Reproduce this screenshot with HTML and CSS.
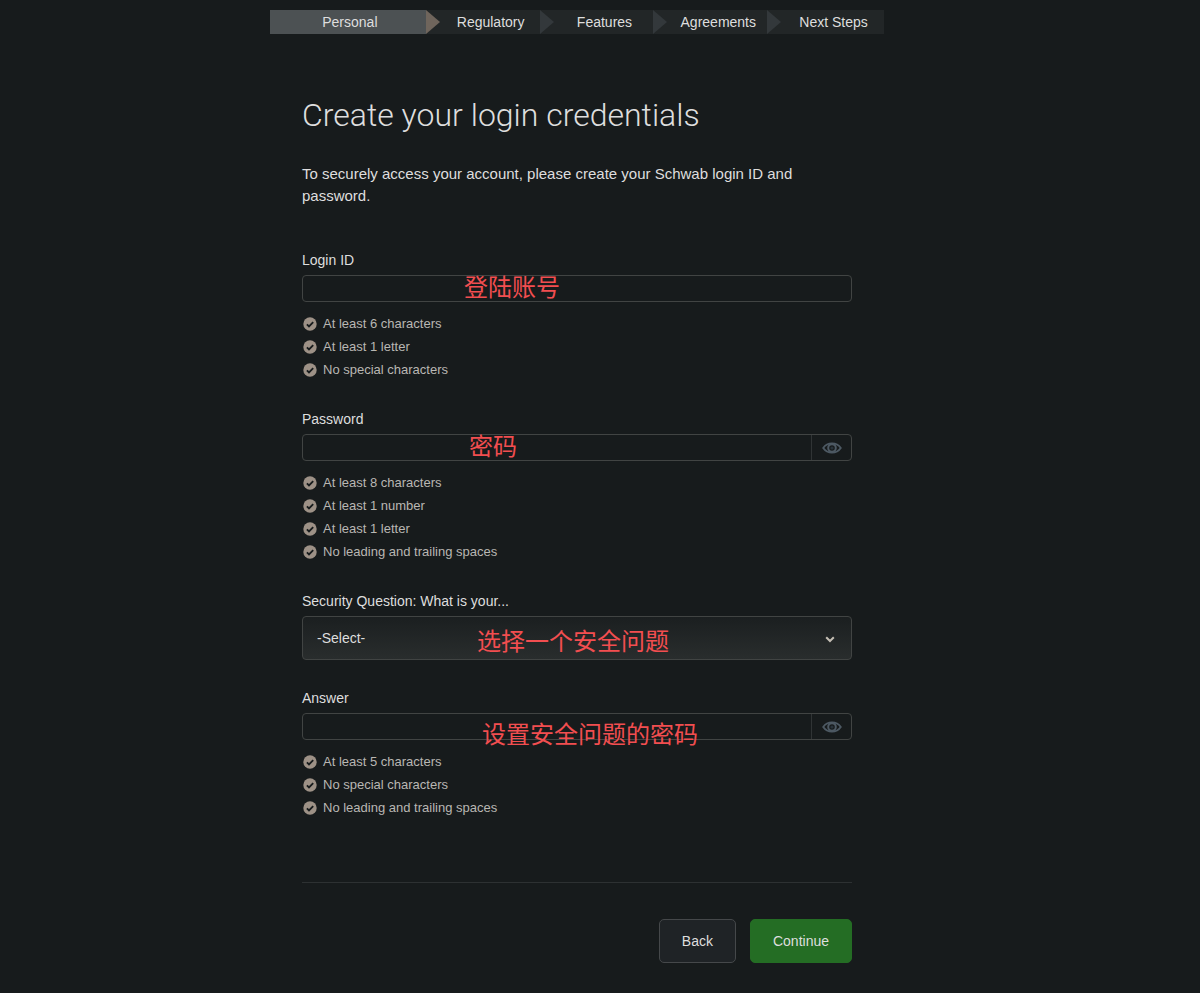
FILE: index.html
```html
<!DOCTYPE html>
<html lang="en">
<head>
	<meta charset="utf-8">
	<meta name="viewport" content="width=device-width, initial-scale=1">
	<title>Create your login credentials</title>
	<link rel="stylesheet" href="styles.css">
</head>
<body>
	<svg class="defs" width="0" height="0">
		<symbol id="check" viewBox="0 0 14 14">
			<circle cx="7" cy="7" r="6.7" fill="#9d9186"/>
			<path d="M3.9 7.3l2.1 2.1 4.2-4.3" fill="none" stroke="#171b1c" stroke-width="1.8"/>
		</symbol>
		<symbol id="eye" viewBox="0 0 20 12">
			<path d="M1.2 6C3.4 2.8 6.4 1.4 10 1.4S16.6 2.8 18.8 6C16.6 9.2 13.6 10.6 10 10.6S3.400 9.200 1.200 6z" fill="none" stroke="#4d5963" stroke-width="1.8"/>
			<circle cx="10" cy="6" r="3.8" fill="none" stroke="#4d5963" stroke-width="2"/>
			<circle cx="10" cy="6" r="1.6" fill="#29333b"/>
		</symbol>
	</svg>

	<div class="wrap">
		<ol class="steps">
			<li class="on">Personal</li>
			<li>Regulatory</li>
			<li>Features</li>
			<li>Agreements</li>
			<li>Next Steps</li>
		</ol>

		<form class="main">
			<h1>Create your login credentials</h1>
			<p class="intro">To securely access your account, please create your Schwab login ID and password.</p>

			<div class="group">
				<label for="loginId">Login ID</label>
				<div class="field">
					<input type="text" id="loginId">
					<span class="note note-login" lang="zh">登陆账号</span>
				</div>
				<ul class="rules">
					<li><svg><use href="#check"/></svg>At least 6 characters</li>
					<li><svg><use href="#check"/></svg>At least 1 letter</li>
					<li><svg><use href="#check"/></svg>No special characters</li>
				</ul>
			</div>

			<div class="group">
				<label for="password">Password</label>
				<div class="field">
					<input type="password" id="password">
					<button type="button" class="show" aria-label="Show password"><svg><use href="#eye"/></svg></button>
					<span class="note note-password" lang="zh">密码</span>
				</div>
				<ul class="rules">
					<li><svg><use href="#check"/></svg>At least 8 characters</li>
					<li><svg><use href="#check"/></svg>At least 1 number</li>
					<li><svg><use href="#check"/></svg>At least 1 letter</li>
					<li><svg><use href="#check"/></svg>No leading and trailing spaces</li>
				</ul>
			</div>

			<div class="group">
				<label for="question">Security Question: What is your...</label>
				<div class="field select">
					<select id="question">
						<option>-Select-</option>
					</select>
					<svg class="arrow" viewBox="0 0 10 7"><path d="M1.2 1.2l3.800 3.800 3.800-3.800" fill="none" stroke="#c4beb4" stroke-width="2"/></svg>
					<span class="note note-question" lang="zh">选择一个安全问题</span>
				</div>
			</div>

			<div class="group">
				<label for="answer">Answer</label>
				<div class="field">
					<input type="password" id="answer">
					<button type="button" class="show" aria-label="Show answer"><svg><use href="#eye"/></svg></button>
					<span class="note note-answer" lang="zh">设置安全问题的密码</span>
				</div>
				<ul class="rules">
					<li><svg><use href="#check"/></svg>At least 5 characters</li>
					<li><svg><use href="#check"/></svg>No special characters</li>
					<li><svg><use href="#check"/></svg>No leading and trailing spaces</li>
				</ul>
			</div>

			<div class="actions">
				<button type="button" class="btn">Back</button>
				<button type="submit" class="btn btn-go">Continue</button>
			</div>
		</form>
	</div>
</body>
</html>
```
FILE: styles.css
```css
* {margin: 0; padding: 0; box-sizing: border-box;}
body {padding: 10px 46px 30px 0; background: #171b1c; color: #dedede; font: 14px/20px "Liberation Sans", "Noto Sans CJK SC", sans-serif;}
ol, ul {list-style: none;}
input, select, button {font: inherit; color: inherit;}
.defs {position: absolute;}

.wrap {max-width: 614px; margin: 0 auto;}

/* progress bar */
.steps {display: grid; grid-template-columns: 156fr repeat(3, 114fr) 117fr; height: 24px; line-height: 24px; background: #222627;}
.steps li {position: relative; padding-left: 16px; text-align: center;}
.steps li.on {padding-left: 4px; background: #4c5153;}
.steps li + li::before {content: ""; position: absolute; left: 0; top: 0; border-left: 14px solid #33383b; border-top: 12px solid transparent; border-bottom: 12px solid transparent;}
.steps li.on + li::before {border-left-color: #6f655c;}

.main {padding: 0 32px;}
h1 {margin-top: 61px; font: 300 32px/40px Roboto, sans-serif;}
.intro {max-width: 520px; margin: 28px 0 43px; font-size: 15px; line-height: 22px;}

.group {margin-bottom: 28px;}
.group label {display: block; margin-bottom: 5px;}
.field {position: relative; display: flex; height: 27px; border: 1px solid #414443; border-radius: 4px;}
.field input {flex: 1; min-width: 0; padding: 0 14px; border: 0; background: none;}
.show {display: flex; align-items: center; justify-content: center; width: 40px; border: 0; border-left: 1px solid #303435; background: none;}
.show svg {width: 20px; height: 12px;}

.field.select {height: 44px; background: linear-gradient(#1b1f20, #292d2d);}
.select select {width: 100%; padding: 0 14px; border: 0; background: none; appearance: none;}
.arrow {position: absolute; right: 16px; top: 19px; width: 10px; height: 7px;}

.rules {margin-top: 10px; color: #b9b7b3; font-size: 13px;}
.rules li {display: flex; align-items: center; gap: 6px; height: 23px; padding-left: 1px;}
.rules svg {width: 14px; height: 14px;}

/* red notes over the fields */
.note {position: absolute; color: #f24e50; font-size: 24px; line-height: 24px; white-space: nowrap; pointer-events: none;}
.note-login {left: 161px; top: 0;}
.note-password {left: 166px; top: 0;}
.note-question {left: 174px; top: 13px;}
.note-answer {left: 179px; top: 9px;}

.actions {display: flex; justify-content: flex-end; gap: 14px; margin-top: 63px; padding-top: 36px; border-top: 1px solid #2d3132;}
.btn {height: 44px; padding: 0 22px; border: 1px solid #45484a; border-radius: 5px; background: #1f2326;}
.btn-go {border-color: #246d24; background: #246d24;}
```
